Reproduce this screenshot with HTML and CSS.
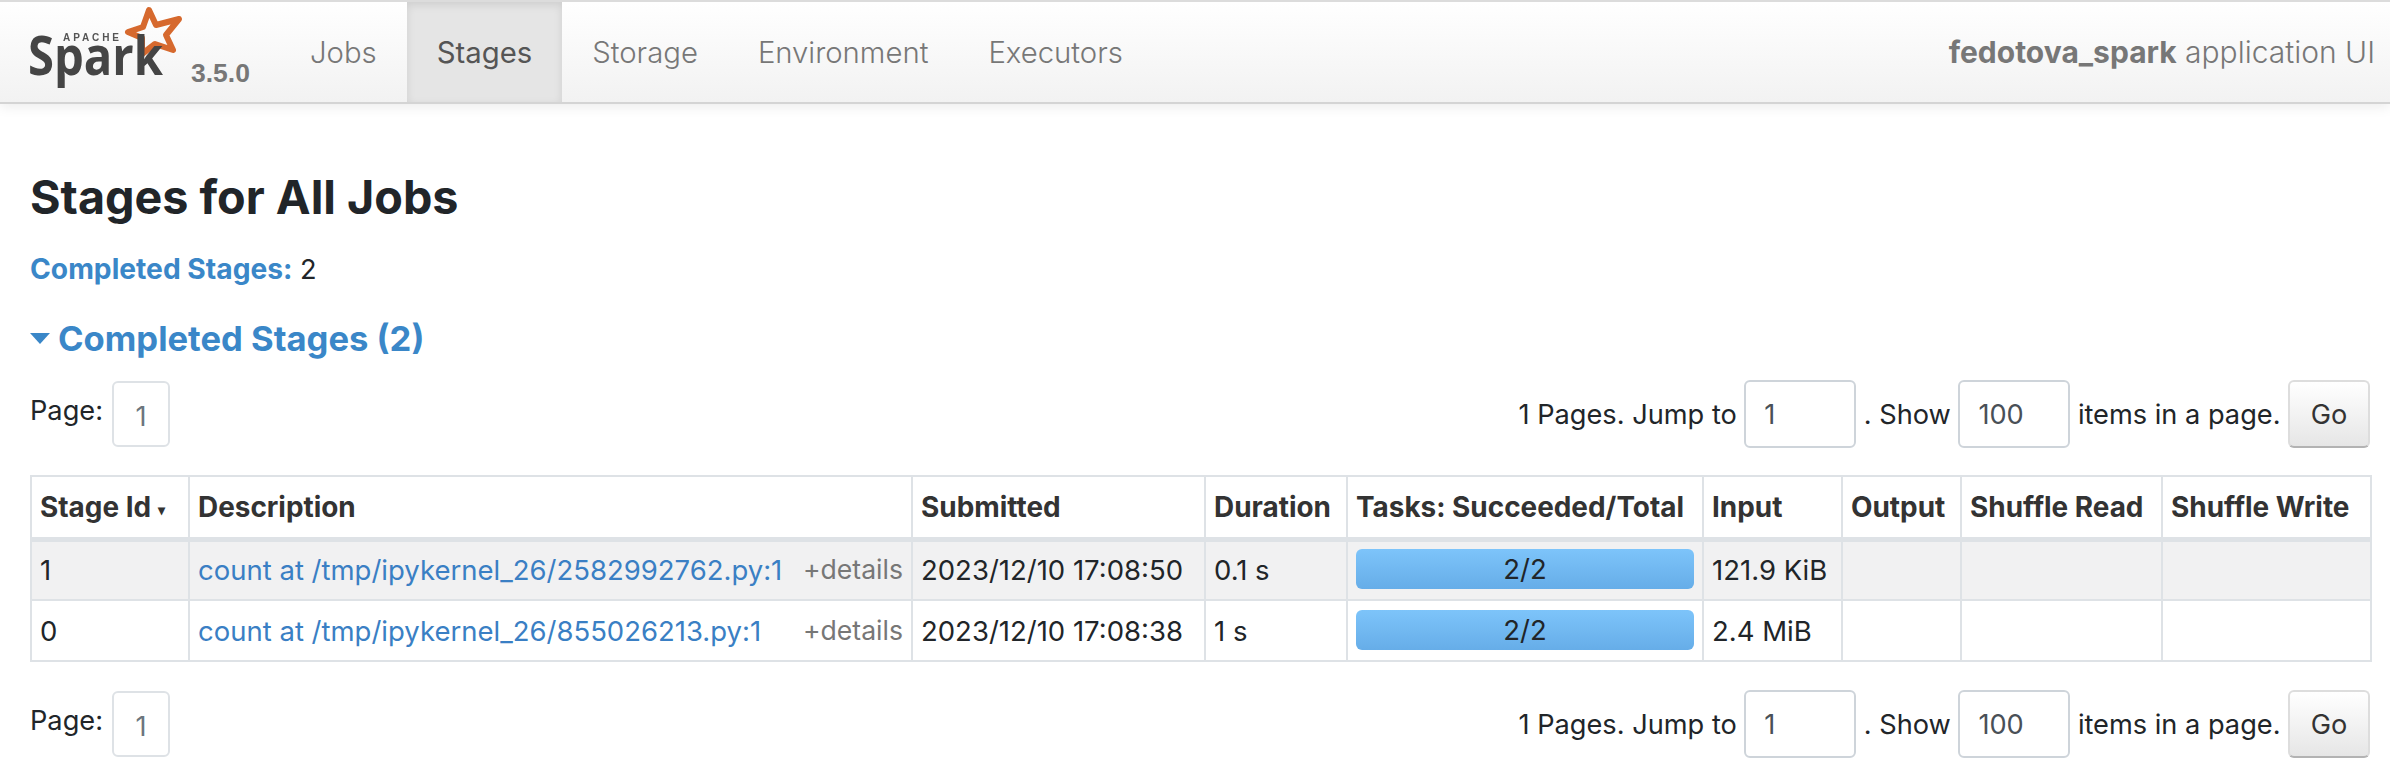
FILE: index.html
```html
<!DOCTYPE html>
<html>
  <head>
    <title>Stages for All Jobs</title>
    <link rel="stylesheet" href="styles.css">
  </head>
  <body>
    <div class="navbar">
      <a class="brand">
        <svg class="logo" width="190" height="98" viewBox="0 0 190 98">
          <defs>
            <filter id="soft"><feGaussianBlur stdDeviation="0.6"/></filter>
          </defs>
          <g filter="url(#soft)">
            <polygon points="149,10 156,25 179,19 166,35 173,50 155,44 142,54 142,38 128,32 143,27" fill="none" stroke="#d6692d" stroke-width="6" stroke-linejoin="round"/>
            <text x="63" y="41" class="logo-apache" textLength="56">APACHE</text>
            <text x="28" y="75" class="logo-spark" textLength="135" lengthAdjust="spacingAndGlyphs">Spark</text>
          </g>
        </svg>
        <span class="version">3.5.0</span>
      </a>
      <ul class="nav">
        <li>Jobs</li>
        <li class="active">Stages</li>
        <li>Storage</li>
        <li>Environment</li>
        <li>Executors</li>
      </ul>
      <p class="app-name"><strong>fedotova_spark</strong> application UI</p>
    </div>

    <div class="content">
      <h1>Stages for All Jobs</h1>
      <p class="summary"><strong>Completed Stages:</strong> 2</p>
      <h2 class="section-title"><span class="arrow"></span>Completed Stages (2)</h2>

      <div class="pager pager-top">
        <div class="pager-left">
          <span class="page-label">Page:</span>
          <span class="page-link">1</span>
        </div>
        <form class="pager-form">
          <label>1 Pages. Jump to</label>
          <input type="text" value="1">
          <label>. Show</label>
          <input type="text" value="100">
          <label>items in a page.</label>
          <button type="button">Go</button>
        </form>
      </div>

      <table>
        <colgroup>
          <col class="c-id">
          <col class="c-desc">
          <col class="c-sub">
          <col class="c-dur">
          <col class="c-tasks">
          <col class="c-input">
          <col class="c-output">
          <col class="c-read">
          <col class="c-write">
        </colgroup>
        <thead>
          <tr>
            <th>Stage Id <span class="sort">&#9662;</span></th>
            <th>Description</th>
            <th>Submitted</th>
            <th>Duration</th>
            <th>Tasks: Succeeded/Total</th>
            <th>Input</th>
            <th>Output</th>
            <th>Shuffle Read</th>
            <th>Shuffle Write</th>
          </tr>
        </thead>
        <tbody>
          <tr class="odd">
            <td>1</td>
            <td>
              <div class="desc">
                <a>count at /tmp/ipykernel_26/2582992762.py:1</a>
                <span class="details">+details</span>
              </div>
            </td>
            <td>2023/12/10 17:08:50</td>
            <td>0.1 s</td>
            <td><div class="progress">2/2</div></td>
            <td>121.9 KiB</td>
            <td></td>
            <td></td>
            <td></td>
          </tr>
          <tr>
            <td>0</td>
            <td>
              <div class="desc">
                <a>count at /tmp/ipykernel_26/855026213.py:1</a>
                <span class="details">+details</span>
              </div>
            </td>
            <td>2023/12/10 17:08:38</td>
            <td>1 s</td>
            <td><div class="progress">2/2</div></td>
            <td>2.4 MiB</td>
            <td></td>
            <td></td>
            <td></td>
          </tr>
        </tbody>
      </table>

      <div class="pager pager-bottom">
        <div class="pager-left">
          <span class="page-label">Page:</span>
          <span class="page-link">1</span>
        </div>
        <form class="pager-form">
          <label>1 Pages. Jump to</label>
          <input type="text" value="1">
          <label>. Show</label>
          <input type="text" value="100">
          <label>items in a page.</label>
          <button type="button">Go</button>
        </form>
      </div>
    </div>
  </body>
</html>
```
FILE: styles.css
```css
body {
  font-family: Inter, "Liberation Sans", sans-serif;
  font-size: 27.2px;
  color: #212529;
  margin: 0;
  padding: 0;
  background-color: white;
  height: 780px;
  overflow: hidden;
}

.navbar {
  display: flex;
  align-items: stretch;
  height: 100px;
  border-top: 2px solid #dcdcdc;
  border-bottom: 2px solid #d4d4d4;
  background: linear-gradient(#ffffff, #f2f2f2);
  box-shadow: 0 3px 12px rgba(0, 0, 0, 0.08);
  padding-right: 15px;
}

.brand {
  display: flex;
  width: 280px;
}

.logo {
  margin-top: -2px;
  flex: none;
  margin-right: -2px;
}

.logo-apache {
  font-family: "Liberation Sans", sans-serif;
  font-size: 10px;
  font-weight: bold;
  fill: #555;
}

.logo-spark {
  font-family: "Open Sans", sans-serif;
  font-size: 54px;
  font-weight: 700;
  fill: #444;
}

.version {
  font-family: "Liberation Sans", sans-serif;
  font-size: 26.5px;
  font-weight: bold;
  color: #777;
  margin-top: 56px;
  margin-left: 3px;
}

.nav {
  display: flex;
  list-style: none;
  margin: 0;
  padding: 0;
  font-size: 29.3px;
  font-weight: 300;
  color: #777;
}

.nav li {
  display: flex;
  align-items: center;
  padding: 0 30px;
}

.nav li.active {
  color: #555;
  font-weight: 400;
  background-color: #e5e5e5;
  box-shadow: inset 0 3px 8px rgba(0, 0, 0, 0.1);
}

.app-name {
  margin: 0 0 0 auto;
  align-self: center;
  font-size: 30px;
  font-weight: 300;
  color: #777;
}

.app-name strong {
  font-weight: 700;
}

.content {
  padding: 0 20px 0 30px;
}

h1 {
  font-size: 46.7px;
  font-weight: 700;
  line-height: 54px;
  margin: 66px 0 0;
}

.summary {
  margin: 27px 0 0;
  line-height: 36px;
}

.summary strong {
  font-size: 28.2px;
  color: #3a87c8;
  font-weight: 700;
}

.section-title {
  display: flex;
  align-items: center;
  font-size: 34.6px;
  font-weight: 700;
  line-height: 40px;
  color: #3a87c8;
  margin: 30px 0 0;
}

.arrow {
  width: 0;
  height: 0;
  border-left: 10px solid transparent;
  border-right: 10px solid transparent;
  border-top: 11px solid #3a87c8;
  margin-right: 8px;
}

.pager {
  display: flex;
  justify-content: space-between;
  align-items: center;
}

.pager-top {
  margin-top: 22px;
}

.pager-bottom {
  margin-top: 28px;
}

.pager-left {
  display: flex;
  align-items: center;
  gap: 9px;
}

.page-label {
  padding-bottom: 7px;
}

.page-link {
  display: flex;
  align-items: center;
  justify-content: center;
  box-sizing: border-box;
  width: 58px;
  height: 66px;
  border: 2px solid #dee2e6;
  border-radius: 6px;
  color: #6c757d;
  padding-top: 4px;
}

.pager-form {
  display: flex;
  align-items: center;
  gap: 7.5px;
  margin: 0;
}

.pager-form input {
  box-sizing: border-box;
  width: 112px;
  height: 68px;
  padding: 0 18px;
  border: 2px solid #ced4da;
  border-radius: 6px;
  font-family: inherit;
  font-size: 27.2px;
  color: #495057;
}

.pager-form button {
  box-sizing: border-box;
  width: 82px;
  height: 68px;
  font-family: inherit;
  font-size: 27.2px;
  color: #333;
  border: 2px solid #ddd;
  border-bottom-color: #b3b3b3;
  border-radius: 6px;
  background: linear-gradient(#ffffff, #e6e6e6);
}

table {
  table-layout: fixed;
  width: 2340px;
  margin-top: 27px;
  border-collapse: collapse;
  font-size: 27.5px;
}

th,
td {
  box-sizing: border-box;
  border: 2px solid #dee2e6;
  padding: 0 8px;
  text-align: left;
  vertical-align: middle;
  white-space: nowrap;
}

th {
  height: 63px;
  font-size: 27.9px;
  font-weight: 700;
  color: #333;
  border-bottom-width: 5px;
}

td {
  height: 61px;
}

tr.odd td {
  background-color: #f1f1f2;
}

.c-id { width: 158px; }
.c-desc { width: 723px; }
.c-sub { width: 293px; }
.c-dur { width: 142px; }
.c-tasks { width: 356px; }
.c-input { width: 139px; }
.c-output { width: 119px; }
.c-read { width: 201px; }
.c-write { width: 209px; }

.sort {
  font-size: 14px;
  vertical-align: 2px;
}

.desc {
  display: flex;
  justify-content: space-between;
}

.desc a {
  color: #3a7fc4;
}

.details {
  font-size: 26.6px;
  color: #777;
}

.progress {
  height: 40px;
  line-height: 40px;
  margin-bottom: 2px;
  text-align: center;
  border-radius: 6px;
  background: linear-gradient(#7dc4fa, #66ade8);
}
```
